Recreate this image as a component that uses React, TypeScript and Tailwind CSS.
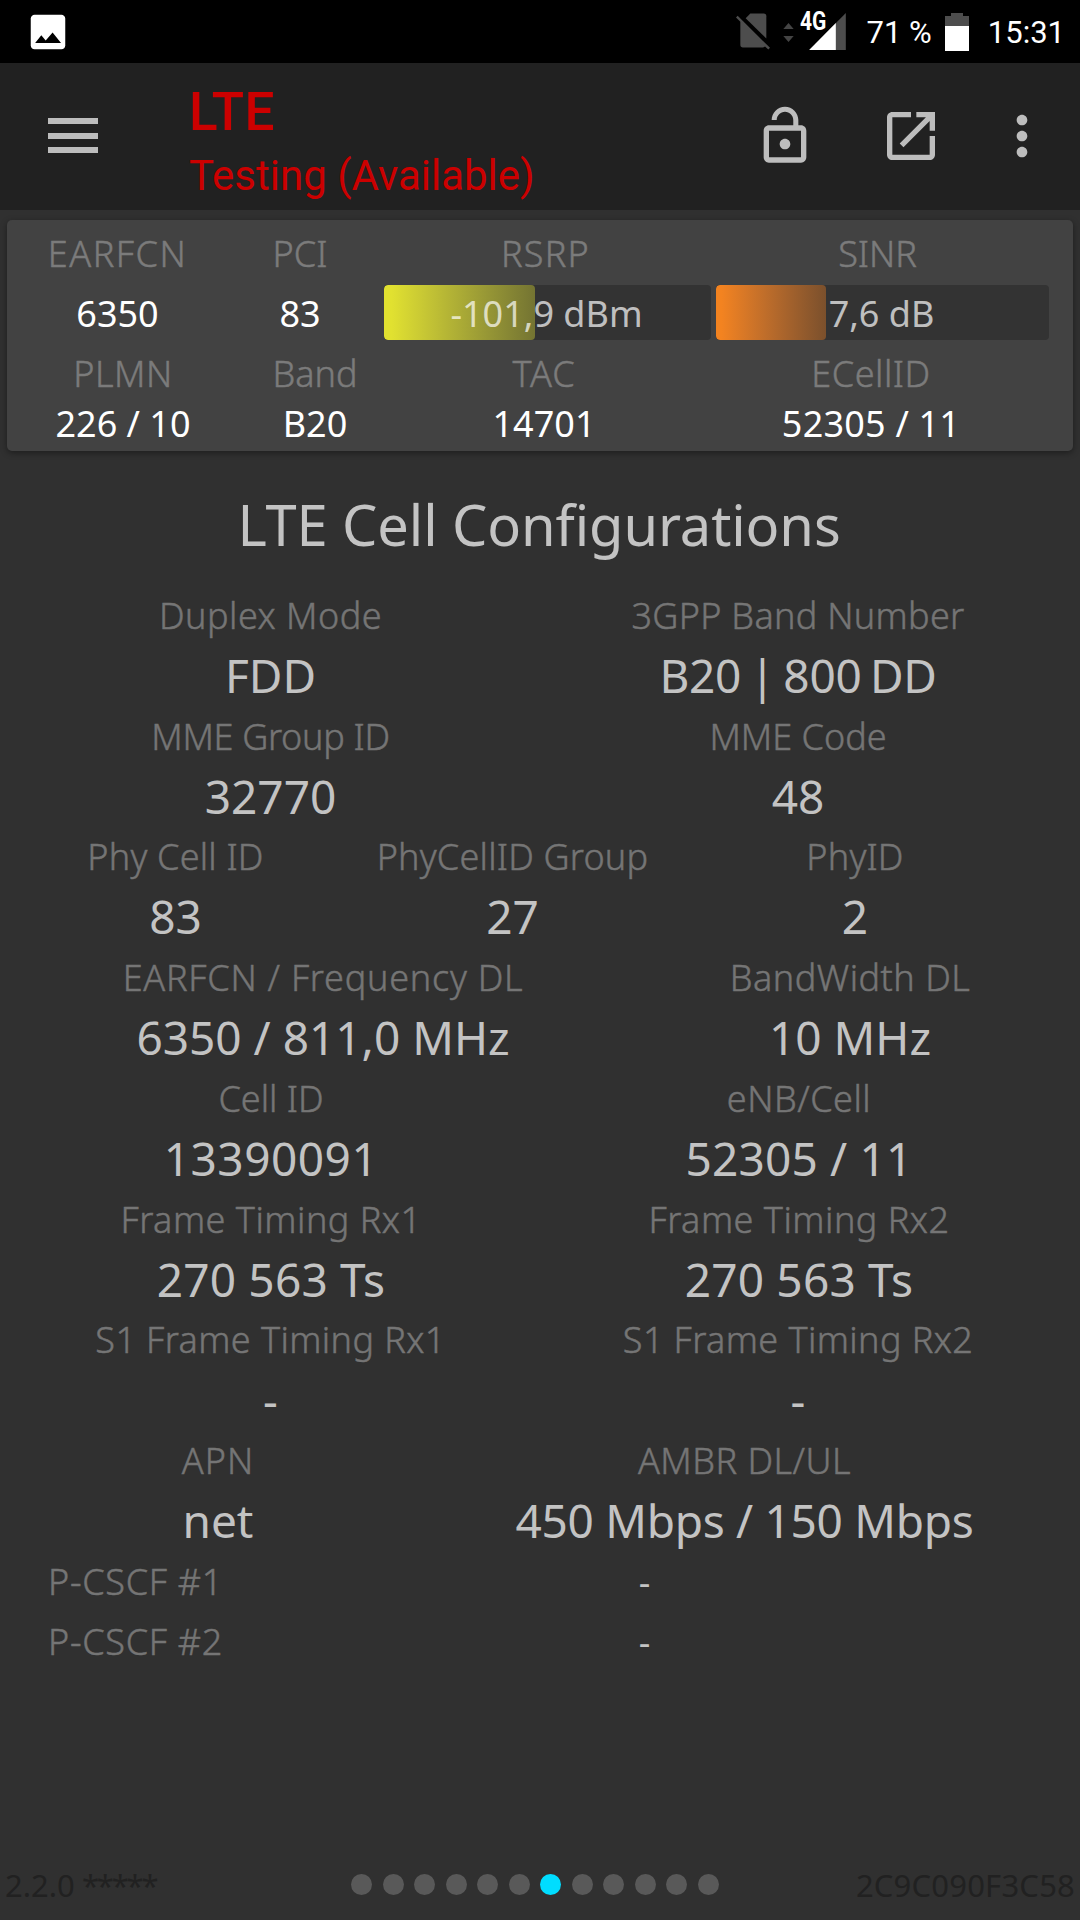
import type { ReactNode } from 'react'

interface Cell {
  label: string
  value: string
  width: string
  labelClass?: string
  valueClass?: string
}

const CONFIG_ROWS: Cell[][] = [
  [
    { label: 'Duplex Mode', value: 'FDD', width: 'w-[541px]', labelClass: 'tracking-[0.5px]' },
    { label: '3GPP Band Number', value: 'B20 | 800 DD', width: 'w-[514px]', labelClass: 'tracking-[0.3px]', valueClass: '[word-spacing:-3px] tracking-[-0.3px]' },
  ],
  [
    { label: 'MME Group ID', value: '32770', width: 'w-[541px]', labelClass: 'tracking-[-0.3px]' },
    { label: 'MME Code', value: '48', width: 'w-[514px]' },
  ],
  [
    { label: 'Phy Cell ID', value: '83', width: 'w-[351px]', labelClass: 'tracking-[0.2px]' },
    { label: 'PhyCellID Group', value: '27', width: 'w-[323px]', labelClass: 'tracking-[0.2px]' },
    { label: 'PhyID', value: '2', width: 'w-[362px]', labelClass: 'tracking-[0.2px]' },
  ],
  [
    { label: 'EARFCN / Frequency DL', value: '6350 / 811,0 MHz', width: 'w-[646px]', labelClass: 'tracking-[0.75px]' },
    { label: 'BandWidth DL', value: '10 MHz', width: 'w-[408px]', labelClass: 'tracking-[0.5px]' },
  ],
  [
    { label: 'Cell ID', value: '13390091', width: 'w-[542px]', valueClass: 'tracking-[0.5px]' },
    { label: 'eNB/Cell', value: '52305 / 11', width: 'w-[514px]', labelClass: 'tracking-[0.5px]', valueClass: 'tracking-[0.2px]' },
  ],
  [
    { label: 'Frame Timing Rx1', value: '270 563 Ts', width: 'w-[542px]', labelClass: 'tracking-[0.5px]', valueClass: 'tracking-[0.2px]' },
    { label: 'Frame Timing Rx2', value: '270 563 Ts', width: 'w-[514px]', labelClass: 'tracking-[0.5px]', valueClass: 'tracking-[0.2px]' },
  ],
  [
    { label: 'S1 Frame Timing Rx1', value: '-', width: 'w-[541px]', labelClass: 'tracking-[0.4px]' },
    { label: 'S1 Frame Timing Rx2', value: '-', width: 'w-[514px]', labelClass: 'tracking-[0.4px]' },
  ],
  [
    { label: 'APN', value: 'net', width: 'w-[436px]', labelClass: 'tracking-[1px]' },
    { label: 'AMBR DL/UL', value: '450 Mbps / 150 Mbps', width: 'w-[617px]', labelClass: 'tracking-[0.5px]', valueClass: 'tracking-[-0.3px]' },
  ],
]

const SERVING_CELL: Cell[] = [
  { label: 'PLMN', value: '226 / 10', width: 'w-[232px]', labelClass: 'tracking-[0.5px]' },
  { label: 'Band', value: 'B20', width: 'w-[152px]' },
  { label: 'TAC', value: '14701', width: 'w-[306px]', labelClass: 'tracking-[1px]' },
  { label: 'ECellID', value: '52305 / 11', width: 'w-[348px]', labelClass: 'tracking-[0.5px]', valueClass: 'tracking-[0.2px]' },
]

const PAGE_COUNT = 12
const ACTIVE_PAGE = 6

function StatusBar() {
  return (
    <div className="flex h-[63px] items-center bg-black pl-[25px] pr-[15px] font-[Roboto,sans-serif] text-[31px] leading-none text-white">
      <svg viewBox="0 0 24 24" className="size-[46px] fill-white">
        <path d="M21 19V5c0-1.1-.9-2-2-2H5c-1.1 0-2 .9-2 2v14c0 1.1.9 2 2 2h14c1.1 0 2-.9 2-2z" />
        <path d="M5.300 17.800L8.500 13.700L10.800 16.400L14.400 12.200L18.800 17.800z" fill="#000" />
      </svg>
      {/* no SIM in slot 1 */}
      <svg viewBox="104 38 102 110" className="ml-auto h-[37px] w-[34px] fill-[#4d4d4d]">
        <path d="M133 53L147 39H187Q195 39 195 47V114Z" />
        <path d="M104 51L109 46L206 142L201 147L191 138Q188 141 183 141H125Q117 141 117 133V64Z" />
      </svg>
      <svg viewBox="246 69 31 57" className="ml-[13px] mt-[2px] h-[19px] w-[11px] fill-[#444]">
        <path d="M246 87L261.500 69L277 87ZM246 108H277L261.500 126Z" />
      </svg>
      <div className="relative ml-[6px] flex h-[37px] w-[46px] justify-end">
        <svg viewBox="327 36 110 111" className="size-[37px]">
          <path d="M327 147L437 36V147Z" fill="#4d4d4d" />
          <path d="M327 147L407 66V147Z" fill="#fff" />
        </svg>
        <span className="absolute -top-px left-0 origin-left scale-x-[0.84] text-[25px] font-bold leading-[20px]">4G</span>
      </div>
      <span className="ml-[21px] mt-px">71 %</span>
      <svg viewBox="0 0 24 38" className="ml-[13px] h-[38px] w-6">
        <path d="M0 3H6V0H18V3H24V13H0Z" fill="#4d4d4d" />
        <path d="M0 13H24V38H0Z" fill="#fff" />
      </svg>
      <span className="ml-[19px] mt-px">15:31</span>
    </div>
  )
}

function ToolbarIcon({ path, className }: { path: string; className: string }) {
  return (
    <svg viewBox="0 0 24 24" className={`mb-[2px] size-16 fill-[#bdbdbd] ${className}`}>
      <path d={path} />
    </svg>
  )
}

function Toolbar() {
  return (
    <header className="flex h-[147px] items-center bg-[#212121] pl-12 pr-[26px]">
      <div className="mb-[2px] flex w-[50px] flex-col gap-[8.500px]">
        <div className="h-[6px] bg-[#bdbdbd]" />
        <div className="h-[6px] bg-[#bdbdbd]" />
        <div className="h-[6px] bg-[#bdbdbd]" />
      </div>
      <div className="ml-[91px] mt-[13px] font-[Roboto,sans-serif] text-[#cc0000]">
        <div className="text-[53px] font-medium leading-[64px] tracking-[0.5px]">LTE</div>
        <div className="text-[42px] leading-[63px]">Testing (Available)</div>
      </div>
      <ToolbarIcon
        className="ml-auto"
        path="M12 17c1.1 0 2-.9 2-2s-.9-2-2-2-2 .9-2 2 .9 2 2 2zm6-9h-1V6c0-2.76-2.24-5-5-5S7 3.240 7 6h1.900c0-1.710 1.390-3.100 3.100-3.100 1.710 0 3.100 1.390 3.100 3.100v2H6c-1.100 0-2 .9-2 2v10c0 1.100.9 2 2 2h12c1.100 0 2-.9 2-2V10c0-1.100-.9-2-2-2zm0 12H6V10h12v10z"
      />
      <ToolbarIcon
        className="ml-[62px]"
        path="M19 19H5V5h7V3H5c-1.110 0-2 .9-2 2v14c0 1.100.89 2 2 2h14c1.100 0 2-.9 2-2v-7h-2v7zM14 3v2h3.590l-9.830 9.830 1.410 1.410L19 6.410V10h2V3h-7z"
      />
      <ToolbarIcon
        className="ml-[47px]"
        path="M12 8c1.100 0 2-.9 2-2s-.9-2-2-2-2 .9-2 2 .9 2 2 2zm0 2c-1.100 0-2 .9-2 2s.9 2 2 2 2-.9 2-2-.9-2-2-2zm0 6c-1.100 0-2 .9-2 2s.9 2 2 2 2-.9 2-2-.9-2-2-2z"
      />
    </header>
  )
}

function CardColumn({ label, width, labelClass = '', children }: { label: string; width: string; labelClass?: string; children: ReactNode }) {
  return (
    <div className={`flex flex-col gap-[7px] text-center ${width}`}>
      <div className={`font-light leading-[48px] text-[#7b7b7b] [-webkit-text-stroke:0.5px] ${labelClass}`}>{label}</div>
      {children}
    </div>
  )
}

function Meter({ value, fill }: { value: string; fill: string }) {
  return (
    <div className="relative h-[55px] overflow-hidden rounded bg-[#333]">
      <div className={`absolute inset-y-0 left-0 rounded bg-linear-to-r ${fill}`} />
      <div className="relative pr-[2px] leading-[57px] text-white/70">{value}</div>
    </div>
  )
}

function ServingCellCard() {
  return (
    <section className="mx-[7px] mt-[10px] h-[231px] rounded-[5px] bg-[#424242] pt-[10px] text-[36px] text-white shadow-[0_2px_6px_rgba(0,0,0,0.4)]">
      <div className="flex">
        <CardColumn label="EARFCN" width="w-[221px]" labelClass="tracking-[1.5px]">
          <div className="leading-[57px]">6350</div>
        </CardColumn>
        <CardColumn label="PCI" width="w-[144px]">
          <div className="leading-[57px]">83</div>
        </CardColumn>
        <CardColumn label="RSRP" width="ml-3 w-[327px]" labelClass="pr-1 tracking-[1.2px]">
          <Meter value="-101,9 dBm" fill="w-[151px] from-[#e1e130] from-5% to-[#747432]" />
        </CardColumn>
        <CardColumn label="SINR" width="ml-[5px] w-[333px]" labelClass="pr-[10px]">
          <Meter value="7,6 dB" fill="w-[110px] from-[#f38320] from-5% to-[#7b502c]" />
        </CardColumn>
      </div>
      <div className="mt-[8px] flex text-center">
        {SERVING_CELL.map(({ label, value, width, labelClass = '', valueClass = '' }) => (
          <div key={label} className={width}>
            <div className={`font-light leading-[48px] text-[#7b7b7b] [-webkit-text-stroke:0.5px] ${labelClass}`}>{label}</div>
            <div className={`leading-[52px] ${valueClass}`}>{value}</div>
          </div>
        ))}
      </div>
    </section>
  )
}

function CellConfigurations() {
  return (
    <section className="flex-1 pt-[33px] text-[#c3c3c3]">
      <h1 className="pr-[2px] text-center text-[56px] leading-[80px] tracking-[-0.1px]">LTE Cell Configurations</h1>
      <div className="mt-[25.750px]">
        {CONFIG_ROWS.map((row) => (
          <div key={row[0].label} className="flex text-center">
            {row.map(({ label, value, width, labelClass = '', valueClass = '' }) => (
              <div key={label} className={`whitespace-nowrap ${width}`}>
                <div className={`text-[36px] font-light leading-[51px] text-[#757575] [-webkit-text-stroke:0.5px] ${labelClass}`}>{label}</div>
                <div className={`text-[46px] leading-[69.750px] ${valueClass}`}>{value}</div>
              </div>
            ))}
          </div>
        ))}
        {['P-CSCF #1', 'P-CSCF #2'].map((label) => (
          <div key={label} className="flex h-[60px] pl-12 text-[36px] leading-[51px]">
            <div className="w-[187px] whitespace-nowrap font-light tracking-[0.7px] text-[#757575] [-webkit-text-stroke:0.5px]">{label}</div>
            <div className="w-[819px] text-center">-</div>
          </div>
        ))}
      </div>
    </section>
  )
}

function Footer() {
  return (
    <footer className="flex h-[71px] items-center px-[5px] text-[31px] leading-[40px] text-[#212121]">
      <div className="w-[346px]">
        2.2.0 <span className="-ml-px tracking-[-2.200px]">*****</span>
      </div>
      <div className="flex gap-[10.500px]">
        {Array.from({ length: PAGE_COUNT }, (_, i) => (
          <span key={i} className={`size-[21px] rounded-full ${i === ACTIVE_PAGE ? 'bg-[#00ddff]' : 'bg-[#595959]'}`} />
        ))}
      </div>
      <div className="ml-auto tracking-[0.2px]">2C9C090F3C58</div>
    </footer>
  )
}

export default function App() {
  return (
    <div className="flex h-[1920px] w-[1080px] flex-col overflow-hidden bg-[#303030] font-['Noto_Sans',sans-serif]">
      <StatusBar />
      <Toolbar />
      <ServingCellCard />
      <CellConfigurations />
      <Footer />
    </div>
  )
}
